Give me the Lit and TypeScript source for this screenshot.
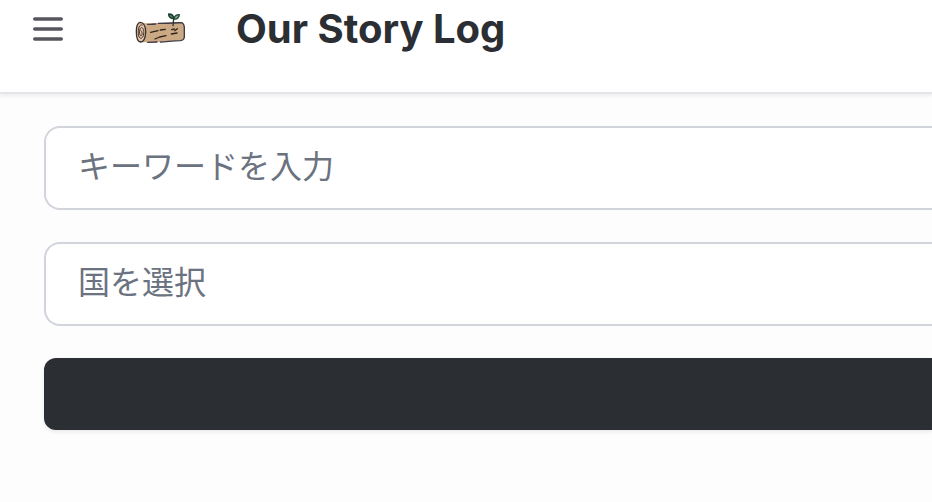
import { LitElement, html, css } from "lit";
import { customElement } from "lit/decorators.js";

@customElement("log-mark")
class LogMark extends LitElement {
  static styles = css`
    :host { display: block; }
    .mark { display: block; width: 52px; height: 32px; }
  `;

  render() {
    return html`
      <svg class="mark" viewBox="42 38 156 96" fill="none" stroke-linecap="round" stroke-linejoin="round" role="img" aria-label="Log with a sprout">
        <path d="M62 67 C95 71 145 66 184 67 Q193 69 193 82 L193 111 Q192 120 181 121 C150 120 120 126 66 126 Z" fill="#cba985"/>
        <path d="M60 66 C72 66 77 78 77 96 C76 115 71 125 62 125 C53 124 49 112 49 94 C49 77 52 68 60 66 Z" fill="#dfc8ae" stroke="#3b302d" stroke-width="4"/>
        <path d="M67 74 C57 70 54 86 55 101 C56 118 69 118 71 101 C73 84 64 76 60 86 C57 97 59 108 64 106 C68 102 67 92 63 91" stroke="#49352c" stroke-width="3"/>
        <path d="M83 72 C92 73 98 71 107 71 M115 69 C139 69 160 68 184 67 Q192 69 193 81 L193 110 Q192 120 181 121 C158 121 143 124 121 125 M111 125 L83 126" stroke="#3d3a44" stroke-width="4"/>
        <path d="M92 96 L114 91 M121 89 L136 87 M105 116 L119 110 L138 106 M155 88 L163 86 M164 91 L172 85 M154 101 L171 98" stroke="#30251f" stroke-width="4"/>
        <path d="M159 76 C161 66 159 61 162 55" stroke="#29382e" stroke-width="4"/>
        <path d="M161 55 C151 55 145 48 146 41 C155 41 161 46 161 55 Z" fill="#4f7961" stroke="#173d2b" stroke-width="4"/>
        <path d="M162 56 C163 47 170 43 178 43 C177 52 171 58 162 56 Z" fill="#89a994" stroke="#204834" stroke-width="4"/>
      </svg>
    `;
  }
}

@customElement("app-root")
class AppRoot extends LitElement {
  static styles = css`
    :host {
      display: block;
      min-height: 100vh;
      background: #fdfdfd;
      color: #2b2e33;
      font-family: Inter, "Noto Sans CJK JP", sans-serif;
    }
    *, *::before, *::after { box-sizing: border-box; }
    .header {
      display: flex;
      align-items: center;
      padding: 0 32px 34px;
      background: #fff;
      border-bottom: 2px solid #e3e5e8;
      box-shadow: 0 2px 4px rgb(0 0 0 / 7%);
    }
    .menu {
      display: block;
      padding: 0;
      border: 0;
      background: none;
      cursor: pointer;
    }
    .bars { display: block; width: 32px; height: 32px; }
    .mark { margin: 0 50px 0 70px; }
    .title {
      margin: 0;
      font-size: 40px;
      font-weight: 700;
      line-height: 58px;
      white-space: nowrap;
    }
    .search {
      display: flex;
      flex-direction: column;
      gap: 32px;
      padding: 32px 0 32px 44px;
    }
    .field {
      display: block;
      width: 100%;
      height: 84px;
      margin: 0;
      padding: 0 32px 8px;
      border: 2px solid #d1d5db;
      border-right: 0;
      border-radius: 16px 0 0 16px;
      outline: 0;
      background: #fff;
      color: #6b7280;
      font: 32px/48px "Noto Sans CJK JP", sans-serif;
      appearance: none;
    }
    .field::placeholder { color: #6b7280; opacity: 1; }
    .submit {
      height: 72px;
      border: 0;
      border-radius: 12px 0 0 12px;
      background: #2b2e33;
      box-shadow: 0 2px 4px rgb(0 0 0 / 8%);
      cursor: pointer;
    }
  `;

  render() {
    return html`
      <header class="header">
        <button class="menu" type="button" aria-label="メニュー">
          <svg class="bars" viewBox="0 0 32 32" fill="none" stroke="#57565f" stroke-width="3.6" stroke-linecap="round" aria-hidden="true">
            <path d="M2.8 6H29.2M2.8 16H29.2M2.8 26H29.2"/>
          </svg>
        </button>
        <log-mark class="mark"></log-mark>
        <h1 class="title">Our Story Log</h1>
      </header>
      <main>
        <form class="search">
          <input class="field" type="text" name="keyword" aria-label="キーワード" placeholder="キーワードを入力">
          <select class="field" name="country" aria-label="国">
            <option value="">国を選択</option>
          </select>
          <button class="submit" type="button" aria-label="検索"></button>
        </form>
      </main>
    `;
  }
}
